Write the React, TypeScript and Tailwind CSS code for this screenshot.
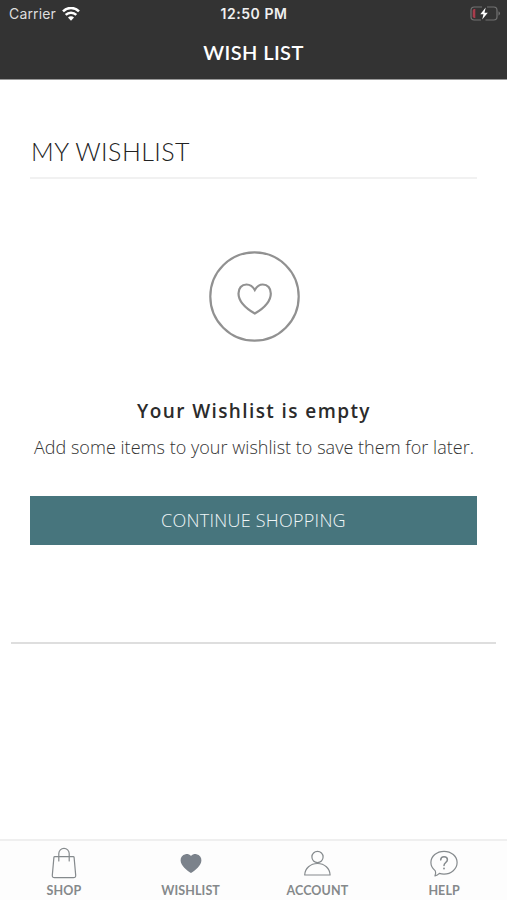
import type { ReactNode } from "react";

const tabs: { label: string; icon: ReactNode }[] = [
  {
    label: "SHOP",
    icon: (
      <svg width="28" height="34" viewBox="0 0 28 34" fill="none" stroke="#858a8d" strokeWidth="1.2" strokeLinecap="round">
        <path d="M4.800 10.600h18.400q.8 0 .9.8l1.600 18q.1 2.300-2.200 2.300H4.500q-2.300 0-2.200-2.300L3.900 11.400q.1-.8.9-.8Z" />
        <path d="M8.800 14.900V7.600a5.200 5.200 0 0 1 10.400 0v7.300" />
      </svg>
    ),
  },
  {
    label: "WISHLIST",
    icon: (
      <svg width="28" height="34" viewBox="0 0 28 34" fill="#7b828b">
        <path d="M14 10.100C12.300 7.900 9.900 7.900 8.500 8.200 5.300 8.900 3.500 11.500 3.600 14.400c.2 5.300 6.200 9.800 10.400 12.500 4.200-2.700 10.200-7.200 10.400-12.500.1-2.900-1.700-5.500-4.900-6.200-1.400-.3-3.800-.3-5.500 1.900Z" />
      </svg>
    ),
  },
  {
    label: "ACCOUNT",
    icon: (
      <svg width="28" height="34" viewBox="0 0 28 34" fill="none" stroke="#858a8d" strokeWidth="1.2" strokeLinejoin="round">
        <circle cx="14.500" cy="11" r="5.600" />
        <path d="M1.700 29C1.900 22.200 7.500 17.500 14.500 17.500s12.400 4.700 12.600 11.500Z" />
      </svg>
    ),
  },
  {
    label: "HELP",
    icon: (
      <svg width="28" height="34" viewBox="0 0 28 34" fill="none" stroke="#858a8d" strokeWidth="1.2" strokeLinecap="round" strokeLinejoin="round">
        <path d="M5.300 24.900C2.500 22.700.9 19.800.9 16.600.9 10.200 6.800 5.300 14 5.300s13.100 4.900 13.100 11.300S21.200 28.100 14 28.100c-1.700 0-3.200-.2-4.600-.7-1.300 1.300-2.700 2.100-4.400 2.400.8-1.500 1-3.200.3-4.900Z" />
        <path d="M10.700 13.900c.1-2 1.400-3.100 3.300-3.100 2 0 3.400 1.200 3.400 2.900 0 2.600-3.400 3-3.400 5.800" strokeWidth="1.500" />
        <circle cx="14" cy="22.500" r=".9" fill="#858a8d" stroke="none" />
      </svg>
    ),
  },
];

const WifiIcon = () => (
  <svg width="18" height="14" viewBox="0 0 18 14" fill="none" stroke="#fff" strokeWidth="2.500">
    <path d="M1 4.300a11.300 11.300 0 0 1 16 0" />
    <path d="M3.700 7.900a7.500 7.500 0 0 1 10.600 0" />
    <path d="M9 13.700 6 10.400a4.200 4.200 0 0 1 6 0Z" fill="#fff" stroke="none" />
  </svg>
);

const BatteryIcon = () => (
  <svg width="31" height="16" viewBox="0 0 31 16" fill="none">
    <path d="M12 1H4.200Q1 1 1 4.200v6.600Q1 14 4.200 14H11M17 1h6.800Q27 1 27 4.200v6.600q0 3.200-3.200 3.200H15.500" stroke="#737373" strokeWidth="1.200" />
    <path d="M28.500 5.300q3 2.200 0 4.400Z" fill="#737373" />
    <path d="M5.300 3v9H4.400Q2.700 12 2.700 10.300V4.700Q2.700 3 4.400 3Z" fill="#a93c4c" />
    <path d="m15.700 1.600-5.400 6.600h3.200l-1.300 5.300 5.600-6.800h-3.300Z" fill="#fff" />
  </svg>
);

const App = () => {
  return (
    <div className="flex h-[900px] w-[507px] flex-col overflow-hidden bg-white font-['Open_Sans',sans-serif]">
      <header className="h-[80px] border-b border-[#999999] bg-[#333333] text-white">
        <div className="grid h-[27px] grid-cols-3 items-center pr-[6px] pl-[9px] font-['Inter',sans-serif]">
          <div className="flex items-center gap-[6px]">
            <span className="text-[14px] tracking-[0.150px] text-[#dedede]">Carrier</span>
            <WifiIcon />
          </div>
          <span className="pr-[2px] text-center text-[14px] font-semibold tracking-[0.550px] whitespace-nowrap text-[#f0f0f0]">
            12:50 PM
          </span>
          <div className="flex justify-end">
            <BatteryIcon />
          </div>
        </div>
        <h1 className="pt-[11px] text-center font-['Lato',sans-serif] text-[20px] leading-[28px] font-semibold tracking-[0.400px]">
          WISH LIST
        </h1>
      </header>

      <main className="flex flex-1 flex-col px-[30px] pt-[53px]">
        <h2 className="h-[46px] border-b-2 border-[#f1f1f1] pl-px font-['Lato',sans-serif] text-[25px] leading-[37px] font-light tracking-[0.450px] text-[#222222]">
          MY WISHLIST
        </h2>

        <div className="flex flex-col items-center pt-[72px] pl-px">
          <svg width="92" height="92" viewBox="0 0 92 92" fill="none" stroke="#919191" strokeWidth="2.200">
            <circle cx="46.500" cy="45.500" r="44.200" />
            <path d="M46.800 39C44.800 35.400 41.800 33.500 38.500 33.500c-4.900 0-8 3.900-8 8.900 0 8.200 8.300 15.400 16.300 20.100 8-4.700 16-11.900 16-20.100 0-5-3.100-8.900-8-8.900-3.300 0-6 1.900-8 5.500Z" />
          </svg>
          <h3 className="mt-[53px] text-[19px] leading-[30px] font-semibold tracking-[1.400px] whitespace-nowrap text-[#2b2b2b]">
            Your Wishlist is empty
          </h3>
          <p className="mt-[6px] text-[18px] leading-[30px] font-light tracking-[0.030px] whitespace-nowrap text-[#333333]">
            Add some items to your wishlist to save them for later.
          </p>
        </div>

        <button className="mt-[34px] h-[49px] w-full bg-[#47757d] text-[18px] font-light tracking-[0.250px] text-[#f0f6f8]">
          CONTINUE SHOPPING
        </button>

        <div className="-mx-[19px] mt-[97px] h-[2px] bg-[#dedede]" />
      </main>

      <nav className="grid h-[61px] grid-cols-4 border-t-2 border-[#efefef] bg-[#fdfdfd]">
        {tabs.map((tab) => (
          <div key={tab.label} className="flex flex-col items-center pt-[5px] pl-px">
            {tab.icon}
            <span className="mt-[2px] font-['Lato',sans-serif] text-[12.5px] leading-[18px] font-bold tracking-[0.100px] text-[#85898b]">
              {tab.label}
            </span>
          </div>
        ))}
      </nav>
    </div>
  );
};

export default App;
